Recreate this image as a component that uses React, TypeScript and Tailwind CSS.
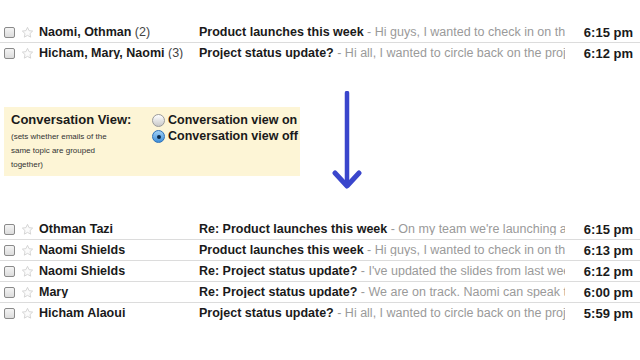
import React from "react";

type Mail = { from: React.ReactNode; subject: string; snippet: string; time: string };

const before: Mail[] = [
  { from: <><b>Naomi, Othman</b> <span className="font-normal text-[#444]">(2)</span></>, subject: "Product launches this week", snippet: "Hi guys, I wanted to check in on the launch plans", time: "6:15 pm" },
  { from: <><b>Hicham, Mary, Naomi</b> <span className="font-normal text-[#444]">(3)</span></>, subject: "Project status update?", snippet: "Hi all, I wanted to circle back on the project", time: "6:12 pm" }
];

const after: Mail[] = [
  { from: <b>Othman Tazi</b>, subject: "Re: Product launches this week", snippet: "On my team we're launching a new feature", time: "6:15 pm" },
  { from: <b>Naomi Shields</b>, subject: "Product launches this week", snippet: "Hi guys, I wanted to check in on the launch plans", time: "6:13 pm" },
  { from: <b>Naomi Shields</b>, subject: "Re: Project status update?", snippet: "I've updated the slides from last week", time: "6:12 pm" },
  { from: <b>Mary</b>, subject: "Re: Project status update?", snippet: "We are on track. Naomi can speak to it", time: "6:00 pm" },
  { from: <b>Hicham Alaoui</b>, subject: "Project status update?", snippet: "Hi all, I wanted to circle back on the project", time: "5:59 pm" }
];

function Checkbox() {
  return <div className="h-[11px] w-[11px] shrink-0 rounded-[2px] border border-[#8a8a8a] bg-gradient-to-b from-[#f4f4f4] to-[#dcdcdc]" />;
}

function Star() {
  return (
    <svg width="13" height="13" viewBox="0 0 24 24" className="shrink-0">
      <path d="M12 2.5l2.9 6.1 6.6.8-4.9 4.6 1.3 6.6L12 17.3l-5.9 3.3 1.3-6.6-4.9-4.6 6.6-.8z" fill="#fbfbfb" stroke="#cfcfcf" strokeWidth="1.6" strokeLinejoin="round" />
    </svg>
  );
}

function Row({ mail, tall, last }: { mail: Mail; tall?: boolean; last?: boolean }) {
  return (
    <div className={`flex items-center text-[12.5px] ${tall ? "h-[21px]" : "h-[20px]"} ${last ? "" : "border-b border-[#dcdcdc]"}`}>
      <div className="ml-[4px]"><Checkbox /></div>
      <div className="ml-[6px]"><Star /></div>
      <div className="ml-[5px] w-[160px] shrink-0 truncate text-[#1a1a1a]">{mail.from}</div>
      <div className="w-[366px] shrink-0 truncate [text-overflow:clip]">
        <b className="text-[#1a1a1a]">{mail.subject}</b>
        <span className="font-normal text-[#9a9a9a]"> - {mail.snippet}</span>
      </div>
      <div className="ml-auto mr-[7px] text-[13px] font-bold text-[#1a1a1a]">{mail.time}</div>
    </div>
  );
}

function Radio({ on }: { on?: boolean }) {
  return on ? (
    <div className="flex h-[13px] w-[13px] shrink-0 items-center justify-center rounded-full border border-[#2c6fb8] bg-gradient-to-b from-[#9fd0f5] to-[#3e8fd9]">
      <div className="h-[4px] w-[4px] rounded-full bg-[#0b2a4a]" />
    </div>
  ) : (
    <div className="h-[13px] w-[13px] shrink-0 rounded-full border border-[#9a9a9a] bg-gradient-to-b from-[#ffffff] to-[#c9c9c9]" />
  );
}

export default function App() {
  return (
    <div className="h-[360px] w-[640px] overflow-hidden bg-white text-[13px] leading-none" style={{ fontFamily: '"Liberation Sans", Arial, sans-serif' }}>
      <div className="pt-[23px]">
        {before.map((m, i) => <Row key={i} mail={m} last={i === before.length - 1} />)}
      </div>

      <div className="flex h-[156px] items-start">
        <div className="ml-[4px] mt-[44px] flex h-[69px] w-[296px] bg-[#fdf5d6] pl-[7px] pt-[6px]">
          <div className="w-[141px] shrink-0">
            <div className="text-[13px] font-bold text-[#1a1a1a]">Conversation View:</div>
            <div className="mt-[4px] text-[8px] leading-[14px] text-[#333]">
              (sets whether emails of the<br />same topic are grouped<br />together)
            </div>
          </div>
          <div className="flex flex-col gap-[3px] pt-[1px]">
            <div className="flex items-center gap-[3px] whitespace-nowrap text-[12.5px] font-bold text-[#1a1a1a]"><Radio /> Conversation view on</div>
            <div className="flex items-center gap-[3px] whitespace-nowrap text-[12.5px] font-bold text-[#1a1a1a]"><Radio on /> Conversation view off</div>
          </div>
        </div>
        <svg width="30" height="100" viewBox="0 0 30 100" className="ml-[32px] mt-[28px]">
          <line x1="15" y1="2" x2="15" y2="94" stroke="#3a46cc" strokeWidth="4.5" strokeLinecap="round" />
          <polyline points="3,82 15,95 27,82" fill="none" stroke="#3a46cc" strokeWidth="5" strokeLinecap="round" strokeLinejoin="round" />
        </svg>
      </div>

      <div>
        {after.map((m, i) => <Row key={i} mail={m} tall last={i === after.length - 1} />)}
      </div>
    </div>
  );
}
